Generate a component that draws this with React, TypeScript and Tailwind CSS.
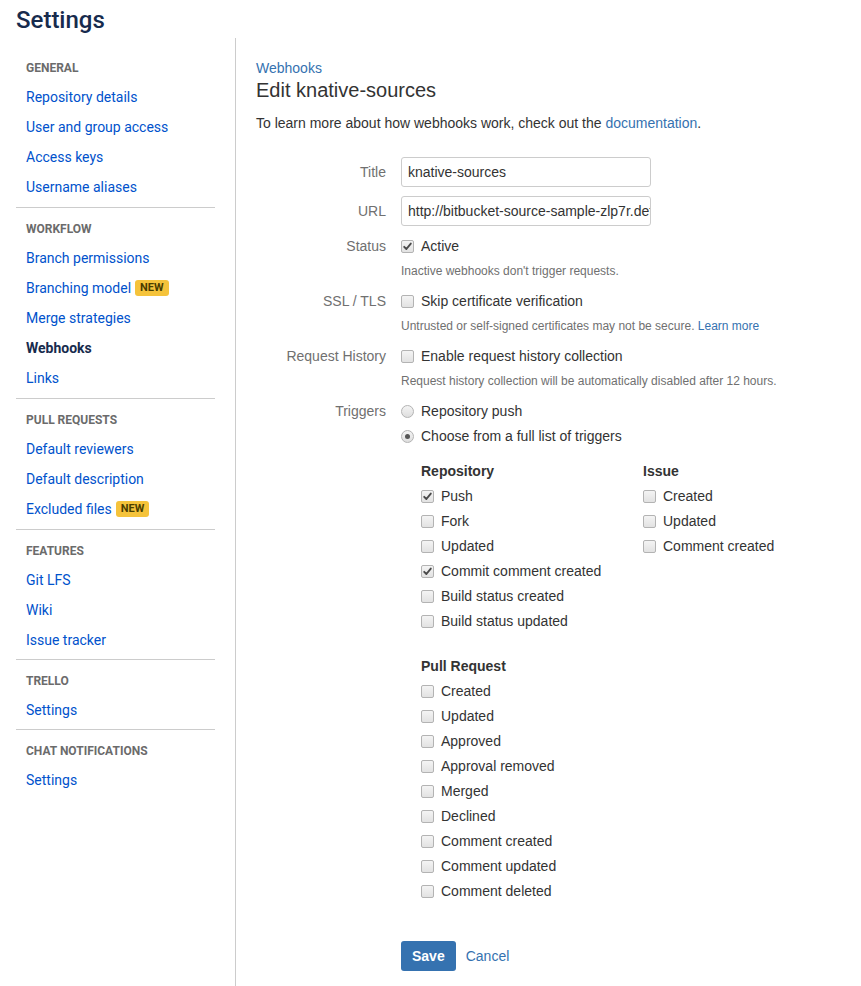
import React from "react";

const sections: { title: string; pb: string; items: { label: string; badge?: boolean; active?: boolean }[] }[] = [
  {
    title: "GENERAL",
    pb: "pb-[5px]",
    items: [
      { label: "Repository details" },
      { label: "User and group access" },
      { label: "Access keys" },
      { label: "Username aliases" },
    ],
  },
  {
    title: "WORKFLOW",
    pb: "pb-[5px]",
    items: [
      { label: "Branch permissions" },
      { label: "Branching model", badge: true },
      { label: "Merge strategies" },
      { label: "Webhooks", active: true },
      { label: "Links" },
    ],
  },
  {
    title: "PULL REQUESTS",
    pb: "pb-[5px]",
    items: [
      { label: "Default reviewers" },
      { label: "Default description" },
      { label: "Excluded files", badge: true },
    ],
  },
  {
    title: "FEATURES",
    pb: "pb-[4px]",
    items: [{ label: "Git LFS" }, { label: "Wiki" }, { label: "Issue tracker" }],
  },
  { title: "TRELLO", pb: "pb-[4px]", items: [{ label: "Settings" }] },
  { title: "CHAT NOTIFICATIONS", pb: "pb-[5px]", items: [{ label: "Settings" }] },
];

function Checkbox({ checked }: { checked?: boolean }) {
  return (
    <span className="relative inline-block w-[13px] h-[13px] shrink-0 rounded-[2px] border border-[#b3b3b3] bg-gradient-to-b from-[#f4f4f4] to-[#e2e2e2]">
      {checked && (
        <svg viewBox="0 0 13 13" className="absolute left-[-1px] top-[-1px] w-[13px] h-[13px]">
          <path d="M3.2 6.8 L5.4 9 L9.8 3.6" fill="none" stroke="#4a4a4a" strokeWidth="1.9" strokeLinecap="round" strokeLinejoin="round" />
        </svg>
      )}
    </span>
  );
}

function Radio({ checked }: { checked?: boolean }) {
  return (
    <span className="relative inline-flex items-center justify-center w-[13px] h-[13px] shrink-0 rounded-full border border-[#b3b3b3] bg-gradient-to-b from-[#f4f4f4] to-[#dedede]">
      {checked && <span className="w-[5px] h-[5px] rounded-full bg-[#555]" />}
    </span>
  );
}

function CheckRow({ label, checked }: { label: string; checked?: boolean }) {
  return (
    <div className="flex items-center h-5 gap-[7px]">
      <Checkbox checked={checked} />
      <span>{label}</span>
    </div>
  );
}

function Label({ children }: { children: React.ReactNode }) {
  return <div className="w-[130px] shrink-0 text-right text-[#707070] leading-5">{children}</div>;
}

export default function App() {
  return (
    <div className="min-h-[986px] bg-white flex flex-col">
      <div className="pl-4 pt-[6px] h-[38px]">
        <h1 className="text-[24px] leading-[28px] font-medium text-[#172b4d]" style={{ fontFamily: "Roboto, sans-serif" }}>
          Settings
        </h1>
      </div>
      <div className="flex flex-1">
        <aside className="w-[236px] shrink-0 border-r border-[#cccccc] pl-4 pr-5 pt-[9px]" style={{ fontFamily: "Roboto, sans-serif" }}>
          {sections.map((s, i) => (
            <div key={i} className={`pt-[11px] ${s.pb} ${i < sections.length - 1 ? "border-b border-[#cccccc]" : ""}`}>
              <div className="h-5 leading-5 px-[10px] text-[12px] font-bold text-[#6b6b6b] mb-1">{s.title}</div>
              {s.items.map((it, j) => (
                <div key={j} className="h-[30px] flex items-center px-[10px] text-[14px]">
                  <span className={it.active ? "font-bold text-[#172b4d]" : "text-[#0052cc]"}>{it.label}</span>
                  {it.badge && (
                    <span className="ml-[4px] h-[16px] leading-[16px] px-[5px] rounded-[3px] bg-[#f5c33b] text-[11px] font-bold text-[#4a3d00]">
                      NEW
                    </span>
                  )}
                </div>
              ))}
            </div>
          ))}
        </aside>
        <main className="flex-1 pl-5 pt-5 text-[14px] text-[#333333]" style={{ fontFamily: '"Liberation Sans", Arial, sans-serif' }}>
          <div className="leading-5 text-[#3572b0]">Webhooks</div>
          <h2 className="text-[20px] leading-6 text-[#333333]">Edit knative-sources</h2>
          <p className="mt-[11px] leading-5">
            To learn more about how webhooks work, check out the <span className="text-[#3572b0]">documentation</span>.
          </p>

          <div className="mt-6 flex flex-col">
            <div className="flex items-center gap-[15px] mb-[9px]">
              <Label>Title</Label>
              <div className="w-[250px] h-[30px] border border-[#cccccc] rounded-[3px] px-[6px] flex items-center overflow-hidden whitespace-nowrap">
                knative-sources
              </div>
            </div>
            <div className="flex items-center gap-[15px] mb-[10px]">
              <Label>URL</Label>
              <div className="w-[250px] h-[30px] border border-[#cccccc] rounded-[3px] px-[6px] flex items-center overflow-hidden whitespace-nowrap">
                http://bitbucket-source-sample-zlp7r.default.example.com
              </div>
            </div>

            <div className="flex gap-[15px]">
              <Label>Status</Label>
              <div>
                <CheckRow label="Active" checked />
                <div className="mt-[7px] text-[12px] leading-4 text-[#707070]">Inactive webhooks don't trigger requests.</div>
              </div>
            </div>

            <div className="flex gap-[15px] mt-3">
              <Label>SSL / TLS</Label>
              <div>
                <CheckRow label="Skip certificate verification" />
                <div className="mt-[7px] text-[12px] leading-4 text-[#707070]">
                  Untrusted or self-signed certificates may not be secure. <span className="text-[#3572b0]">Learn more</span>
                </div>
              </div>
            </div>

            <div className="flex gap-[15px] mt-3">
              <Label>Request History</Label>
              <div>
                <CheckRow label="Enable request history collection" />
                <div className="mt-[7px] text-[12px] leading-4 text-[#707070]">
                  Request history collection will be automatically disabled after 12 hours.
                </div>
              </div>
            </div>

            <div className="flex gap-[15px] mt-3">
              <Label>Triggers</Label>
              <div className="flex flex-col">
                <div className="flex items-center h-5 gap-[7px]">
                  <Radio />
                  <span>Repository push</span>
                </div>
                <div className="flex items-center h-5 gap-[7px] mt-[5px]">
                  <Radio checked />
                  <span>Choose from a full list of triggers</span>
                </div>

                <div className="pl-5 mt-[15px] flex">
                  <div className="w-[222px] flex flex-col gap-[5px]">
                    <div className="font-bold leading-5">Repository</div>
                    <CheckRow label="Push" checked />
                    <CheckRow label="Fork" />
                    <CheckRow label="Updated" />
                    <CheckRow label="Commit comment created" checked />
                    <CheckRow label="Build status created" />
                    <CheckRow label="Build status updated" />
                  </div>
                  <div className="flex flex-col gap-[5px]">
                    <div className="font-bold leading-5">Issue</div>
                    <CheckRow label="Created" />
                    <CheckRow label="Updated" />
                    <CheckRow label="Comment created" />
                  </div>
                </div>

                <div className="pl-5 mt-[25px] flex flex-col gap-[5px]">
                  <div className="font-bold leading-5">Pull Request</div>
                  <CheckRow label="Created" />
                  <CheckRow label="Updated" />
                  <CheckRow label="Approved" />
                  <CheckRow label="Approval removed" />
                  <CheckRow label="Merged" />
                  <CheckRow label="Declined" />
                  <CheckRow label="Comment created" />
                  <CheckRow label="Comment updated" />
                  <CheckRow label="Comment deleted" />
                </div>

                <div className="mt-[40px] flex items-center gap-[10px]">
                  <button className="h-[30px] px-[11px] rounded-[3px] bg-[#3572b0] text-white font-bold">Save</button>
                  <span className="text-[#3572b0]">Cancel</span>
                </div>
              </div>
            </div>
          </div>
        </main>
      </div>
    </div>
  );
}
